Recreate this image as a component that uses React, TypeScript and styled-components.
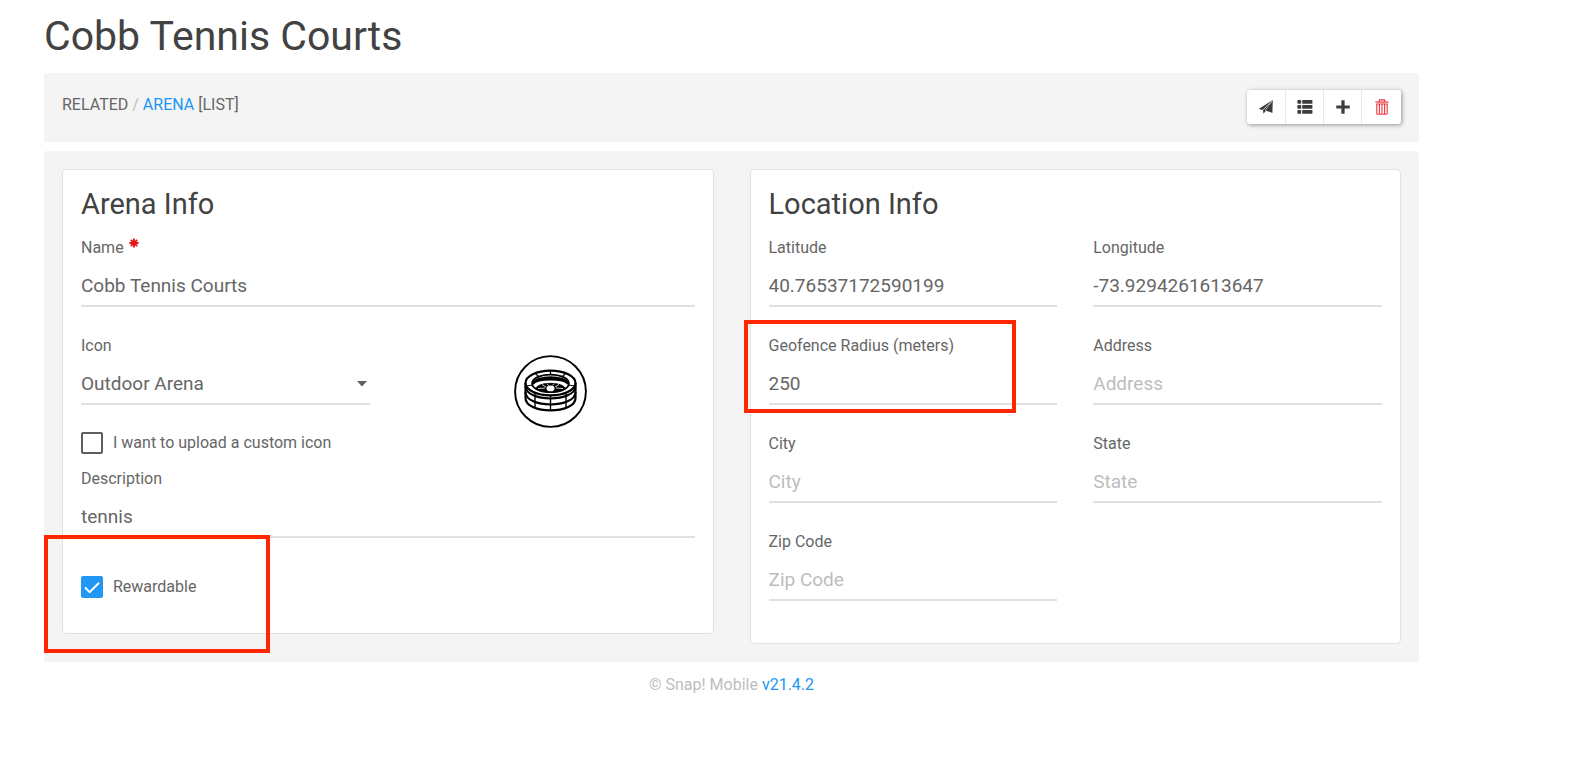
import React from 'react';
import styled, { createGlobalStyle } from 'styled-components';

const colors = {
  heading: '#424242',
  text: '#666666',
  muted: '#bdbdbd',
  link: '#2196f3',
  panel: '#f4f4f4',
  line: '#e0e0e0',
  danger: '#e8141c',
  mark: '#ff2600',
};

const GlobalStyle = createGlobalStyle`
  *, *::before, *::after { box-sizing: border-box; }
  body {
    margin: 0;
    background: #fff;
    color: ${colors.text};
    font: 400 16px/20px Roboto, "Liberation Sans", sans-serif;
  }
`;

const Page = styled.main`
  padding: 8px 165px 0 44px;
`;

const Title = styled.h1`
  margin: 0 0 9px;
  font-size: 41px;
  line-height: 56px;
  font-weight: 400;
  color: ${colors.heading};
`;

const Link = styled.a`
  color: ${colors.link};
  text-decoration: none;
`;

const Toolbar = styled.header`
  display: flex;
  justify-content: space-between;
  align-items: flex-start;
  padding: 17px 18px 18px;
  margin-bottom: 9px;
  border-radius: 3px;
  background: ${colors.panel};
`;

const Breadcrumb = styled.nav`
  padding-top: 5px;
`;

const Slash = styled.span`
  color: ${colors.muted};
`;

const ButtonGroup = styled.div`
  display: flex;
  border-radius: 3px;
  background: #fff;
  box-shadow: 1px 1px 4px rgba(0, 0, 0, 0.4);
`;

const IconButton = styled.button<{ $danger?: boolean }>`
  display: flex;
  align-items: center;
  justify-content: center;
  width: ${(p) => (p.$danger ? 40 : 38)}px;
  height: 34px;
  padding: 0;
  border: 0;
  background: none;
  color: ${(p) => (p.$danger ? '#f0353b' : '#3c3c3c')};
  cursor: pointer;

  & + & {
    border-left: 1px solid #e8e8e8;
  }
`;

const Panel = styled.form`
  display: grid;
  grid-template-columns: 1fr 1fr;
  align-items: start;
  gap: 36px;
  padding: 18px;
  border-radius: 3px;
  background: ${colors.panel};
`;

const Card = styled.section`
  padding: 18px 18px 13px;
  border: 1px solid #e2e2e2;
  border-radius: 4px;
  background: #fff;
`;

const CardTitle = styled.h2`
  margin: 0 0 18px;
  font-size: 29px;
  line-height: 32px;
  font-weight: 400;
  color: ${colors.heading};
`;

const Columns = styled.div`
  display: grid;
  grid-template-columns: 1fr 1fr;
  column-gap: 36px;
`;

const FieldBox = styled.div`
  position: relative;
  display: flex;
  flex-direction: column;
  margin-bottom: 29px;
`;

const Label = styled.label`
  display: flex;
  gap: 5px;
`;

const controlStyle = `
  width: 100%;
  height: 41px;
  margin: 8px 0 0;
  padding: 0;
  border: 0;
  border-bottom: 2px solid ${colors.line};
  border-radius: 0;
  outline: 0;
  background: none;
  color: ${colors.text};
  font-family: inherit;
  font-size: 19px;
`;

const TextInput = styled.input`
  ${controlStyle}
  &::placeholder {
    color: ${colors.muted};
    opacity: 1;
  }
`;

const SelectWrap = styled.div`
  position: relative;
`;

const Select = styled.select`
  ${controlStyle}
  appearance: none;
`;

const Caret = styled.svg`
  position: absolute;
  right: 3px;
  top: 25px;
  pointer-events: none;
`;

const ArenaPreview = styled.div`
  display: flex;
  justify-content: center;
  align-items: flex-start;
  padding-top: 19px;
`;

const CheckRow = styled.div<{ $spacious?: boolean }>`
  position: relative;
  display: flex;
  align-items: center;
  gap: 10px;
  margin: ${(p) => (p.$spacious ? '38px 0 22px' : '-2px 0 15px')};
`;

const Checkbox = styled.input`
  appearance: none;
  width: 22px;
  height: 22px;
  margin: 0;
  border: 2px solid #5f5f5f;
  border-radius: 2px;
  background: #fff;

  &:checked {
    border-color: ${colors.link};
    background: ${colors.link};
  }
`;

const CheckMark = styled.svg`
  position: absolute;
  left: 0;
  top: 0;
  pointer-events: none;
`;

const Highlight = styled.div<{ $left: number; $top: number; $width: number; $height: number }>`
  position: absolute;
  left: ${(p) => p.$left}px;
  top: ${(p) => p.$top}px;
  width: ${(p) => p.$width}px;
  height: ${(p) => p.$height}px;
  border: 4px solid ${colors.mark};
  pointer-events: none;
`;

const Footer = styled.footer`
  padding: 13px 0;
  text-align: center;
  color: ${colors.muted};
`;

const SendIcon = () => (
  <svg width="16" height="16" viewBox="0 0 16 16" aria-hidden="true">
    <path d="M14.8 1 L.6 10 L4.6 10.9 Z" fill="currentColor" />
    <path d="M14.8 1 L7.4 11.4 L14.4 13.9 Z" fill="currentColor" />
    <path d="M14.8 1 L5 10.8 L5.4 14.8 L7.8 12 L6.9 11.5 Z" fill="currentColor" />
    <path d="M14 2.4 L5.2 10.8" stroke="#fff" strokeWidth=".6" />
  </svg>
);

const ListIcon = () => (
  <svg width="16" height="16" viewBox="0 0 16 16" fill="currentColor" aria-hidden="true">
    {[1, 6, 11].map((y) => (
      <React.Fragment key={y}>
        <rect x=".4" y={y} width="3.8" height="3.8" rx=".8" />
        <rect x="5.2" y={y} width="10.2" height="3.8" rx=".4" />
      </React.Fragment>
    ))}
  </svg>
);

const PlusIcon = () => (
  <svg width="16" height="16" viewBox="0 0 16 16" aria-hidden="true">
    <path d="M8 2.3 V13.7 M2.3 8 H13.7" stroke="currentColor" strokeWidth="3.6" strokeLinecap="square" transform="translate(8 8) scale(.9) translate(-8 -8)" />
  </svg>
);

const TrashIcon = () => (
  <svg width="14" height="16" viewBox="0 0 14 16" fill="none" stroke="currentColor" aria-hidden="true">
    <path d="M.4 3.1 H13.6" strokeWidth="1.2" />
    <path d="M4 3 L4.6 .8 H9.4 L10 3" strokeWidth="1.2" />
    <path d="M1.8 5 H12.2 V14.2 Q12.2 15.3 11 15.3 H3 Q1.8 15.3 1.8 14.2 Z" strokeWidth="1.1" />
    <path d="M4.4 5 V15 M7 5 V15 M9.6 5 V15" strokeWidth="1.1" />
  </svg>
);

const RequiredIcon = () => (
  <svg width="10" height="10" viewBox="0 0 10 10" role="img" aria-label="required">
    <path
      d="M5 .4 V9.6 M.4 5 H9.6 M1.8 1.8 L8.2 8.2 M8.2 1.8 L1.8 8.2"
      stroke={colors.danger}
      strokeWidth="1.9"
    />
  </svg>
);

const ArenaIcon = () => (
  <svg width="73" height="73" viewBox="0 0 73 73" fill="none" stroke="#000" role="img" aria-label="Outdoor Arena">
    <circle cx="36.5" cy="36.5" r="35.4" strokeWidth="1.9" />
    <path d="M11.5 28 V43 C11.5 59.5 61.5 59.5 61.5 43 V28" strokeWidth="2.2" />
    <ellipse cx="36.5" cy="28" rx="25" ry="12.4" strokeWidth="2.2" />
    <path d="M11.5 31 C11.5 47.5 61.5 47.5 61.5 31 M11.5 37 C11.5 53.5 61.5 53.5 61.5 37" strokeWidth="2" />
    <path d="M36.5 40 V55.5 M21 37 V52.5 M52 37 V52.5" strokeWidth="1.4" />
    <path d="M36.5 15.5 V20 M21 18 L25 22 M52 18 L48 22 M11.5 31 L19 30 M61.5 31 L54 30" strokeWidth="1.2" />
    <ellipse cx="36.5" cy="28.4" rx="18.4" ry="8.8" fill="#fff" strokeWidth="1.8" />
    <path d="M19 29 C20 20 53 20 54 29 C50 23 23 23 19 29 Z" fill="#000" strokeWidth="2" />
    <path d="M21.5 34 C23 26.5 50 26.5 51.5 34 C43 37.5 30 37.5 21.5 34 Z" fill="#000" strokeWidth="1" />
    <path d="M28 29.5 L32 32 M45 29.5 L41 32 M24 33.5 L31 33 M49 33.5 L42 33 M33 28.6 L34.5 30.5 M40 28.6 L38.5 30.5" stroke="#fff" strokeWidth=".8" />
    <ellipse cx="36.5" cy="33.4" rx="4" ry="2.8" fill="#fff" stroke="none" />
  </svg>
);

interface FieldProps {
  id: string;
  label: string;
  value?: string;
  placeholder?: string;
  required?: boolean;
  children?: React.ReactNode;
}

const Field = ({ id, label, value, placeholder, required, children }: FieldProps) => (
  <FieldBox>
    <Label htmlFor={id}>
      {label}
      {required && <RequiredIcon />}
    </Label>
    <TextInput id={id} type="text" defaultValue={value} placeholder={placeholder} required={required} />
    {children}
  </FieldBox>
);

export default function App() {
  return (
    <>
      <GlobalStyle />
      <Page>
        <Title>Cobb Tennis Courts</Title>
        <Toolbar>
          <Breadcrumb aria-label="Breadcrumb">
            RELATED <Slash>/</Slash> <Link href="#arena">ARENA</Link> [LIST]
          </Breadcrumb>
          <ButtonGroup>
            <IconButton type="button" aria-label="Send"><SendIcon /></IconButton>
            <IconButton type="button" aria-label="List"><ListIcon /></IconButton>
            <IconButton type="button" aria-label="Add"><PlusIcon /></IconButton>
            <IconButton type="button" aria-label="Delete" $danger><TrashIcon /></IconButton>
          </ButtonGroup>
        </Toolbar>
        <Panel>
          <Card>
            <CardTitle>Arena Info</CardTitle>
            <Field id="name" label="Name" value="Cobb Tennis Courts" required />
            <Columns>
              <FieldBox>
                <Label htmlFor="icon">Icon</Label>
                <SelectWrap>
                  <Select id="icon" defaultValue="outdoor">
                    <option value="outdoor">Outdoor Arena</option>
                  </Select>
                  <Caret width="10" height="6" viewBox="0 0 10 6" aria-hidden="true">
                    <path d="M0 0 H10 L5 5.5 Z" fill="#5f5f5f" />
                  </Caret>
                </SelectWrap>
              </FieldBox>
              <ArenaPreview><ArenaIcon /></ArenaPreview>
            </Columns>
            <CheckRow>
              <Checkbox id="custom-icon" type="checkbox" />
              <label htmlFor="custom-icon">I want to upload a custom icon</label>
            </CheckRow>
            <Field id="description" label="Description" value="tennis" />
            <CheckRow $spacious>
              <Checkbox id="rewardable" type="checkbox" defaultChecked />
              <CheckMark width="22" height="22" viewBox="0 0 22 22" aria-hidden="true">
                <path d="M4 11.5 L8.7 16.2 L18 6.8" fill="none" stroke="#fff" strokeWidth="2" />
              </CheckMark>
              <label htmlFor="rewardable">Rewardable</label>
              <Highlight $left={-37} $top={-41} $width={226} $height={118} />
            </CheckRow>
          </Card>
          <Card>
            <CardTitle>Location Info</CardTitle>
            <Columns>
              <Field id="latitude" label="Latitude" value="40.76537172590199" />
              <Field id="longitude" label="Longitude" value="-73.9294261613647" />
              <Field id="radius" label="Geofence Radius (meters)" value="250">
                <Highlight $left={-25} $top={-16} $width={272} $height={93} />
              </Field>
              <Field id="address" label="Address" placeholder="Address" />
              <Field id="city" label="City" placeholder="City" />
              <Field id="state" label="State" placeholder="State" />
              <Field id="zip" label="Zip Code" placeholder="Zip Code" />
            </Columns>
          </Card>
        </Panel>
        <Footer>
          © Snap! Mobile <Link href="#version">v21.4.2</Link>
        </Footer>
      </Page>
    </>
  );
}
